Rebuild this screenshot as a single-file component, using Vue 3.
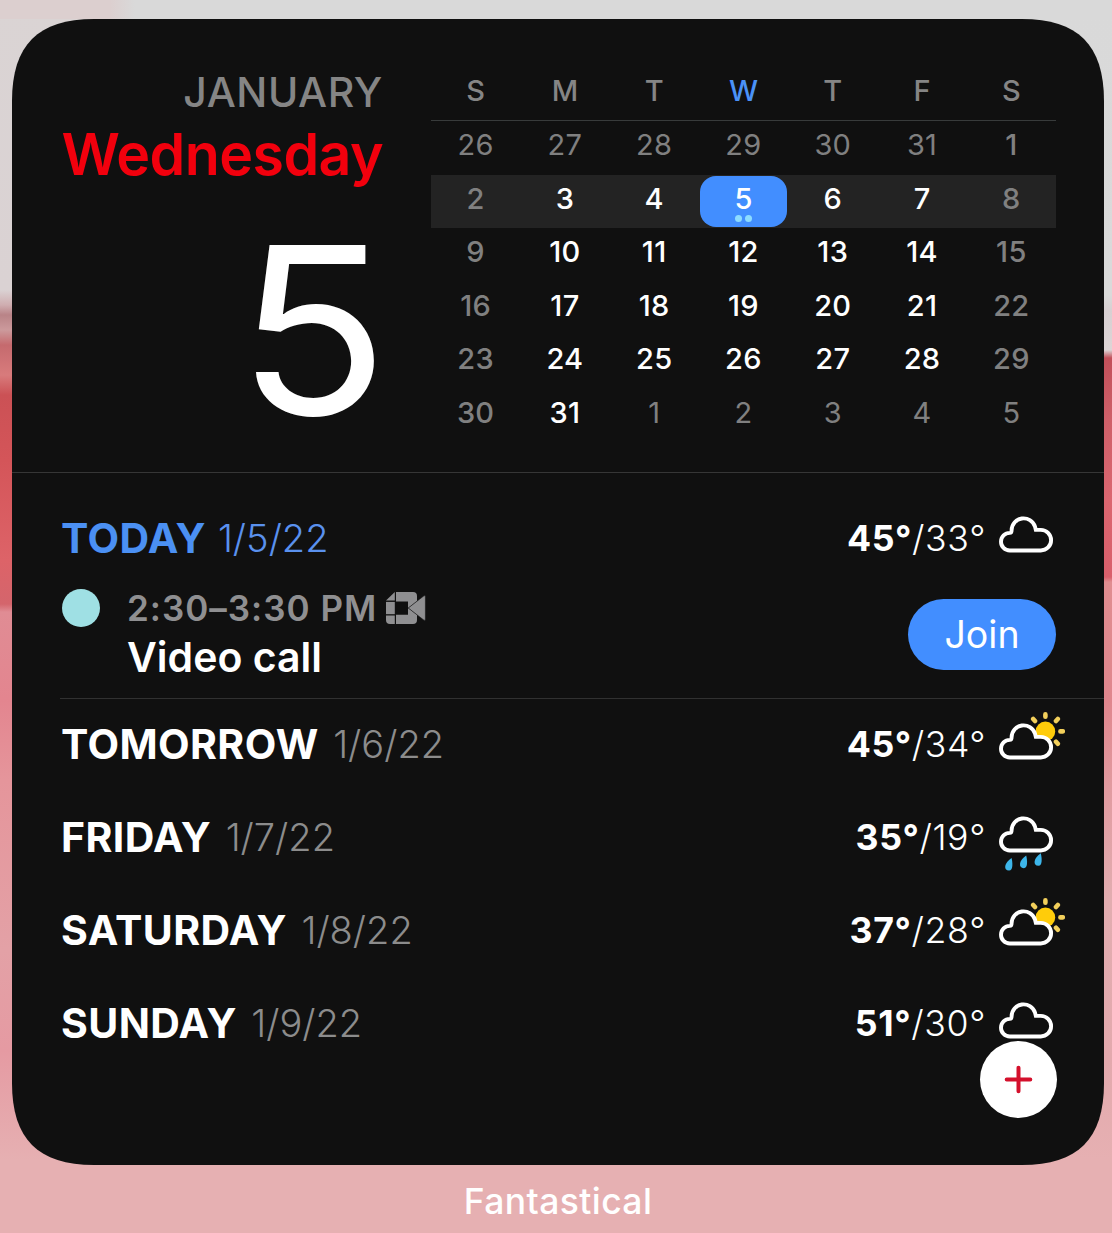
<script setup>
const weekdays = ['S', 'M', 'T', 'W', 'T', 'F', 'S']

const weeks = [
  [26, 27, 28, 29, 30, 31, 1],
  [2, 3, 4, 5, 6, 7, 8],
  [9, 10, 11, 12, 13, 14, 15],
  [16, 17, 18, 19, 20, 21, 22],
  [23, 24, 25, 26, 27, 28, 29],
  [30, 31, 1, 2, 3, 4, 5],
]

function dayClass(row, col, day) {
  const outside = (row === 0 && day > 7) || (row === 5 && day < 7)
  return {
    outside,
    weekend: !outside && (col === 0 || col === 6),
    today: row === 1 && col === 3,
  }
}

const days = [
  { name: 'TOMORROW', date: '1/6/22', high: '45°', low: '/34°', icon: 'sun' },
  { name: 'FRIDAY', date: '1/7/22', high: '35°', low: '/19°', icon: 'rain' },
  { name: 'SATURDAY', date: '1/8/22', high: '37°', low: '/28°', icon: 'sun' },
  { name: 'SUNDAY', date: '1/9/22', high: '51°', low: '/30°', icon: 'cloud' },
]

const cloud =
  'M12.8 48.5A8.8 8.8 0 0 1 12.8 30.9Q14.6 30.9 14.6 28.2A12 12 0 0 1 38 24.6L38.8 27.9H43.8A10.3 10.3 0 0 1 43.8 48.5Z'
</script>

<template>
  <main class="screen">
    <section class="widget">
      <header class="top">
        <div class="hero">
          <div class="month">JANUARY</div>
          <div class="weekday">Wednesday</div>
          <div class="number"><span>5</span></div>
        </div>
        <div class="calendar">
          <div class="heads">
            <span v-for="(d, i) in weekdays" :key="i" :class="{ blue: i === 3 }">{{ d }}</span>
          </div>
          <div v-for="(week, r) in weeks" :key="r" class="week" :class="{ current: r === 1 }">
            <div v-for="(day, c) in week" :key="c" class="day" :class="dayClass(r, c, day)">
              <span>{{ day }}</span>
              <i v-if="r === 1 && c === 3" class="dots"><b></b><b></b></i>
            </div>
          </div>
        </div>
      </header>

      <div class="today-block">
        <div class="row today-row">
          <span class="name">TODAY</span>
          <span class="date">1/5/22</span>
          <span class="temp"><strong>45°</strong><span>/33°</span></span>
          <svg class="weather" viewBox="0 0 68 70" width="68" height="70">
            <path :d="cloud" fill="#101010" stroke="#fff" stroke-width="3.9" />
          </svg>
        </div>
        <div class="event">
          <span class="bullet"></span>
          <div class="details">
            <div class="time">
              <span>2:30–3:30 PM</span>
              <svg viewBox="0 0 40 32" width="40" height="32" fill="#8f8f91">
                <path d="M0 8.6 8.8 0V8.6Z" />
                <path d="M0 9.9H8.8V22.2H0Z" />
                <path d="M0 23.5H8.8V32H4Q0 32 0 28Z" />
                <path d="M10 0H27Q31 0 31 4V9L22 16V9.5H10Z" />
                <path d="M10 32H27Q31 32 31 28V23L22 16V22.8H10Z" />
                <path d="M22.3 16 38 3.8Q39.4 3 39.4 4.8V27.2Q39.4 29 38 28.2Z" stroke="#101010" stroke-width=".5" />
              </svg>
            </div>
            <div class="title">Video call</div>
          </div>
          <button class="join">Join</button>
        </div>
      </div>

      <div class="forecast">
        <div v-for="d in days" :key="d.name" class="row">
          <span class="name">{{ d.name }}</span>
          <span class="date">{{ d.date }}</span>
          <span class="temp"><strong>{{ d.high }}</strong><span>{{ d.low }}</span></span>
          <svg class="weather" viewBox="0 0 68 70" width="68" height="70">
            <g v-if="d.icon === 'sun'">
              <circle cx="48.4" cy="22.4" r="9.8" fill="#ffcc0a" />
              <path
                d="M48.4 5.4V7.8M59 12 60.8 10M63.4 22.4H65.8M59 32.8 60.8 34.8M38 12 36.2 10"
                stroke="#f2cf5b"
                stroke-width="4.6"
                stroke-linecap="round"
              />
            </g>
            <path :d="cloud" fill="#101010" stroke="#fff" stroke-width="3.9" />
            <g v-if="d.icon === 'rain'" fill="#3db6ea">
              <path d="M14.6 56C15.6 60.4 16.4 68.6 12 68.6 6.2 68.6 7 60.8 14.6 56Z" />
              <path d="M29.2 53.6C30.2 58 31.2 66.2 26.8 66.2 21 66.2 21.8 58.4 29.2 53.6Z" />
              <path d="M43.8 51.2C44.8 55.6 45.8 63.8 41.4 63.8 35.6 63.8 36.4 56 43.8 51.2Z" />
            </g>
          </svg>
        </div>
      </div>

      <button class="add" aria-label="Add">
        <svg viewBox="0 0 29 29" width="29" height="29">
          <path d="M14.5 2.7V26.3M2.7 14.5H26.3" stroke="#d4102c" stroke-width="4" stroke-linecap="round" />
        </svg>
      </button>
    </section>
    <footer class="label">Fantastical</footer>
  </main>
</template>

<style>
body {
  margin: 0;
}
</style>

<style scoped>
.screen {
  box-sizing: border-box;
  width: 1112px;
  height: 1233px;
  padding: 19px 8px 0 12px;
  overflow: hidden;
  font-family: Inter, 'Liberation Sans', sans-serif;
  color: #fff;
  background:
    linear-gradient(90deg, #dccfcf 0 110px, #d9d9d9 135px) 0 0 / 1112px 19px no-repeat,
    linear-gradient(#dad4d4 0, #dad2d3 290px, #cfadb0 305px, #b98387 315px, #cc9a9c 330px, #c56a6e 345px, #d87b7c 375px, #cb5155 395px, #d45559 460px, #dd6368 560px, #d4656c 604px, #e08c94 612px, #e3858f 700px, #e5959b 780px, #e3a1a6 950px, #e59aa2 1050px, #e6b0b2 1160px) 0 0 / 500px 1233px no-repeat,
    linear-gradient(#d9d9d9 0, #dadada 295px, #d8d0d2 310px, #ddd5d6 350px, #c2505a 358px, #cf6069 420px, #db6670 500px, #d95f6b 577px, #e08d90 582px, #e0868d 700px, #e19ba0 790px, #e2adb0 900px, #e3a9ad 1060px, #e6b0b2 1160px) 500px 0 / 612px 1233px no-repeat;
}

.widget {
  position: relative;
  width: 1092px;
  height: 1146px;
  background: #101010;
  clip-path: path('M0 82C0 26 26 0 82 0H1010C1066 0 1092 26 1092 82V1064C1092 1120 1066 1146 1010 1146H82C26 1146 0 1120 0 1064Z');
}

.top {
  box-sizing: border-box;
  display: flex;
  justify-content: space-between;
  height: 454px;
  padding: 43px 48px 0 0;
  border-bottom: 1px solid #363636;
}

.hero {
  display: flex;
  flex-direction: column;
  width: 371px;
  text-align: right;
  white-space: nowrap;
}

.month {
  height: 60px;
  line-height: 60px;
  font-size: 41px;
  font-weight: 540;
  letter-spacing: 0.6px;
  color: #858585;
}

.weekday {
  height: 64px;
  line-height: 64px;
  font-size: 57.3px;
  font-weight: 600;
  letter-spacing: -0.6px;
  color: #f2000d;
}

.number {
  height: 288px;
  line-height: 289px;
  font-size: 233px;
  font-weight: 400;
}

.number span {
  display: inline-block;
  transform: translateX(1px) scaleX(1.073);
}

.calendar {
  width: 625px;
  font-size: 29px;
}

.heads,
.week {
  display: grid;
  grid-template-columns: repeat(7, 1fr);
  text-align: center;
}

.heads {
  height: 58px;
  line-height: 58px;
  border-bottom: 1px solid #383b3b;
  font-weight: 480;
  color: #858585;
}

.heads .blue {
  color: #4b92f7;
}

.week {
  height: 53.6px;
  line-height: 48px;
}

.week.current {
  background: #232323;
}

.day {
  font-weight: 550;
  letter-spacing: 0.3px;
}

.day.outside {
  font-weight: 400;
  color: #808080;
}

.day.weekend {
  font-weight: 500;
  color: #808080;
}

.day.today {
  display: flex;
  flex-direction: column;
  align-items: center;
  height: 51px;
  margin: 1px 1px 0;
  line-height: 46px;
  border-radius: 16px;
  background: #428eff;
}

.dots {
  display: flex;
  gap: 3.5px;
  margin-top: -7px;
}

.dots b {
  width: 7px;
  height: 7px;
  border-radius: 50%;
  background: #8ddcff;
}

.today-block {
  display: flex;
  flex-direction: column;
  height: 225px;
  margin-left: 48px;
  border-bottom: 1px solid #313131;
}

.row {
  display: flex;
  align-items: center;
  height: 93px;
  padding: 0 39px 0 1px;
  white-space: nowrap;
}

.today-row {
  flex: none;
  height: 70px;
  padding-top: 30px;
  color: #4b90f3;
}

.forecast {
  margin: -1px 0 0 48px;
}

.name {
  font-size: 41px;
  font-weight: 700;
  letter-spacing: 0.4px;
}

.date {
  margin-left: 14.5px;
  font-size: 38px;
  font-weight: 350;
  color: #8c8c8c;
}

.today-row .date {
  margin-left: 12px;
  color: #5a91ee;
}

.temp {
  margin-left: auto;
  font-size: 35.7px;
  font-weight: 350;
  letter-spacing: 0.6px;
  color: #fff;
}

.forecast .name,
.forecast .date,
.forecast .temp {
  margin-bottom: 2px;
}

.temp strong {
  font-weight: 700;
}

.weather {
  flex: none;
  margin: -2px 0 0 11px;
}

.event {
  display: flex;
  padding: 15px 48px 0 2px;
}

.bullet {
  flex: none;
  width: 38px;
  height: 38px;
  margin-top: 1px;
  border-radius: 50%;
  background: #9fe0e4;
}

.details {
  margin-left: 27px;
}

.time {
  display: flex;
  align-items: center;
  gap: 8.5px;
  height: 38px;
  margin-top: 1px;
  font-size: 35px;
  font-weight: 600;
  letter-spacing: 1px;
  color: #8f8f91;
}

.title {
  height: 60px;
  line-height: 60px;
  font-size: 41px;
  font-weight: 600;
}

button {
  padding: 0;
  border: 0;
  font-family: inherit;
}

.join {
  width: 148px;
  height: 71px;
  margin: 11px 0 0 auto;
  border-radius: 36px;
  background: #428eff;
  color: #fff;
  font-size: 37.5px;
  font-weight: 370;
}

.add {
  position: absolute;
  right: 47px;
  bottom: 47px;
  display: flex;
  align-items: center;
  justify-content: center;
  width: 77px;
  height: 77px;
  border-radius: 50%;
  background: #fff;
}

.label {
  height: 74px;
  line-height: 74px;
  text-align: center;
  font-size: 35.5px;
  font-weight: 480;
  letter-spacing: 0.4px;
}
</style>
